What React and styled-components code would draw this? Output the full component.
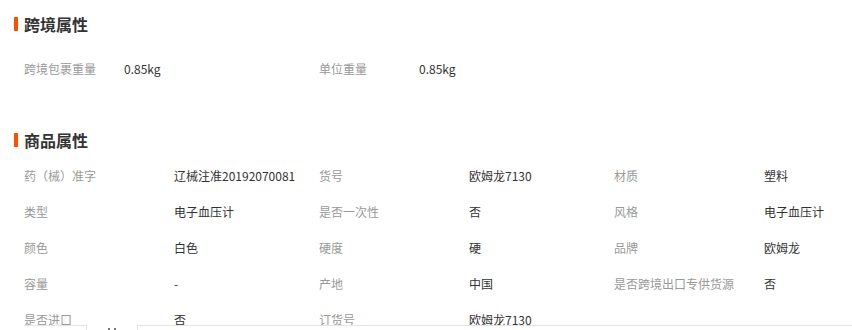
import React from "react";
import styled, { createGlobalStyle } from "styled-components";

const GlobalStyle = createGlobalStyle`
  html, body {
    margin: 0;
    padding: 0;
    background: #fff;
    font-family: "Noto Sans CJK SC", "Noto Sans", sans-serif;
    overflow: hidden;
  }
`;

const Page = styled.div`
  width: 852px;
  height: 330px;
  padding-top: 16px;
  box-sizing: border-box;
  position: relative;
  overflow: hidden;
`;

const Section = styled.section`
  margin-bottom: ${(p) => p.$after || 0}px;
`;

const Header = styled.div`
  display: flex;
  align-items: center;
  height: 16px;
  padding-left: 14px;
`;

const Bar = styled.span`
  width: 4px;
  height: 14px;
  background: #ff5000;
  margin-right: 6px;
`;

const Title = styled.h3`
  margin: 0;
  font-size: 16px;
  line-height: 16px;
  font-weight: 700;
  color: #333;
`;

const Grid = styled.div`
  display: grid;
  grid-template-columns: repeat(3, 295px);
  padding-left: 24px;
  margin-top: ${(p) => p.$top}px;
`;

const Cell = styled.div`
  display: flex;
  align-items: center;
  height: 36px;
  font-size: 12px;
`;

const Label = styled.span`
  width: ${(p) => p.$w}px;
  flex-shrink: 0;
  color: #999;
  white-space: nowrap;
`;

const Value = styled.span`
  color: #333;
  white-space: nowrap;
`;

// next block's tab row, only its top edge shows in the frame
const BottomStrip = styled.div`
  position: absolute;
  left: 0;
  right: 0;
  top: 325px;
  height: 5px;
  display: flex;
  align-items: flex-start;
`;

const TabBox = styled.div`
  margin-left: 24px;
  width: 62px;
  height: 5px;
  border-top: 1px solid #e5e5e5;
  border-right: 1px solid #e5e5e5;
  background: #fff;
`;

const TabMark = styled.span`
  margin-left: 21px;
  margin-top: 3px;
  width: 8px;
  height: 2px;
  border-left: 2px solid #777;
  border-right: 2px solid #777;
  box-sizing: border-box;
`;

const Rule = styled.div`
  margin-left: 21px;
  flex: 1;
  height: 5px;
  border-top: 1px solid #e5e5e5;
  border-left: 1px solid #e5e5e5;
  background: #fff;
`;

const crossBorder = [
  ["跨境包裹重量", "0.85kg"],
  ["单位重量", "0.85kg"],
];

const product = [
  ["药（械）准字", "辽械注准20192070081"],
  ["货号", "欧姆龙7130"],
  ["材质", "塑料"],
  ["类型", "电子血压计"],
  ["是否一次性", "否"],
  ["风格", "电子血压计"],
  ["颜色", "白色"],
  ["硬度", "硬"],
  ["品牌", "欧姆龙"],
  ["容量", "-"],
  ["产地", "中国"],
  ["是否跨境出口专供货源", "否"],
  ["是否进口", "否"],
  ["订货号", "欧姆龙7130"],
];

const App = () => {
  return (
    <Page>
      <GlobalStyle />
      <Section $after={46}>
        <Header>
          <Bar />
          <Title>跨境属性</Title>
        </Header>
        <Grid $top={18}>
          {crossBorder.map(([k, v]) => (
            <Cell key={k}>
              <Label $w={100}>{k}</Label>
              <Value>{v}</Value>
            </Cell>
          ))}
        </Grid>
      </Section>
      <Section>
        <Header>
          <Bar />
          <Title>商品属性</Title>
        </Header>
        <Grid $top={9}>
          {product.map(([k, v]) => (
            <Cell key={k}>
              <Label $w={150}>{k}</Label>
              <Value>{v}</Value>
            </Cell>
          ))}
        </Grid>
      </Section>
      <BottomStrip>
        <TabBox />
        <TabMark />
        <Rule />
      </BottomStrip>
    </Page>
  );
};

export default App;
